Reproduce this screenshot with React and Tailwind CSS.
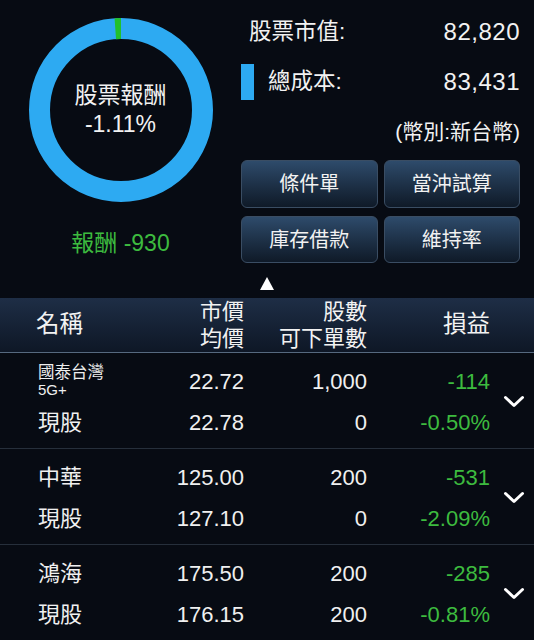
const font = "font-['Liberation_Sans','Noto_Sans_CJK_TC',sans-serif]"

const holdings = [
  { name: '國泰台灣', sub: '5G+', price: '22.72', avg: '22.78', qty: '1,000', avail: '0', pl: '-114', pct: '-0.50%' },
  { name: '中華', price: '125.00', avg: '127.10', qty: '200', avail: '0', pl: '-531', pct: '-2.09%' },
  { name: '鴻海', price: '175.50', avg: '176.15', qty: '200', avail: '200', pl: '-285', pct: '-0.81%' },
]

function Donut() {
  return (
    <div className="relative w-[184px] h-[184px] mx-auto mt-[18px]">
      <svg width="184" height="184" viewBox="0 0 184 184">
        <circle cx="92" cy="92" r="81.5" fill="none" stroke="#2daaf2" strokeWidth="21" />
        <path d="M86.31 10.7 A81.5 81.5 0 0 1 92 10.5" fill="none" stroke="#22c02c" strokeWidth="21" />
      </svg>
      <div className="absolute inset-0 flex flex-col items-center justify-center text-[23px] leading-[29px] text-[#f2f2f2]">
        <span>股票報酬</span>
        <span>-1.11%</span>
      </div>
    </div>
  )
}

function ActionButton({ label }) {
  return (
    <button className="flex-1 rounded-[6px] border border-[#3a4d63] bg-gradient-to-b from-[#2e4b6b] to-[#0f1a28] text-[20px] text-[#f2f2f2]">
      {label}
    </button>
  )
}

function Chevron() {
  return (
    <svg width="22" height="13" viewBox="0 0 22 13">
      <polyline points="2.5,2.5 11,10.5 19.5,2.5" fill="none" stroke="#ffffff" strokeWidth="3" strokeLinecap="round" strokeLinejoin="round" />
    </svg>
  )
}

function HoldingRow({ item }) {
  return (
    <div className="flex items-center border-b border-[#262f3b] pl-[38px] h-[96px]">
      <div className="flex flex-col pt-[2px] gap-[5px]">
        <div className="flex h-[36px] items-center text-[22px]">
          <div className="w-[100px]">
            {item.sub ? (
              <div className="flex flex-col text-[16.5px] leading-[18px] text-[#eeeeee]">
                <span>{item.name}</span>
                <span className="text-[15px]">{item.sub}</span>
              </div>
            ) : (
              <span className="text-[#f0f0f0]">{item.name}</span>
            )}
          </div>
          <div className="w-[106px] text-right text-[#f0f0f0]">{item.price}</div>
          <div className="w-[123px] text-right text-[#f0f0f0]">{item.qty}</div>
          <div className="w-[123px] text-right text-[#3dbb3f]">{item.pl}</div>
        </div>
        <div className="flex h-[36px] items-center text-[22px]">
          <div className="w-[100px] text-[#f0f0f0]">現股</div>
          <div className="w-[106px] text-right text-[#f0f0f0]">{item.avg}</div>
          <div className="w-[123px] text-right text-[#f0f0f0]">{item.avail}</div>
          <div className="w-[123px] text-right text-[#3dbb3f]">{item.pct}</div>
        </div>
      </div>
      <div className="flex flex-1 justify-center pl-[4px] pt-[2px]">
        <Chevron />
      </div>
    </div>
  )
}

export default function App() {
  return (
    <div className={`${font} w-[534px] h-[640px] overflow-hidden bg-[#070b13] text-[#f2f2f2]`}>
      {/* Summary */}
      <div className="flex h-[263px]">
        <div className="w-[241px] flex flex-col">
          <Donut />
          <div className="mt-[26px] text-center text-[23px] leading-[30px] text-[#3dbb3f]">報酬 -930</div>
        </div>
        <div className="flex-1 pr-[14px] pt-[7px] flex flex-col">
          <div className="flex h-[50px] items-center justify-between pl-[8px] text-[22.5px]">
            <span>股票市值:</span>
            <span className="text-[24px] tracking-[0.5px]">82,820</span>
          </div>
          <div className="flex h-[50px] items-center justify-between text-[22.5px]">
            <div className="flex items-center gap-[14px]">
              <div className="w-[13px] h-[36px] bg-[#2daaf2]" />
              <span>總成本:</span>
            </div>
            <span className="text-[24px] tracking-[0.5px]">83,431</span>
          </div>
          <div className="flex h-[50px] items-center justify-end text-[21px]">(幣別:新台幣)</div>
          <div className="mt-[3px] flex gap-[6px] h-[48px]">
            <ActionButton label="條件單" />
            <ActionButton label="當沖試算" />
          </div>
          <div className="mt-[8px] flex gap-[6px] h-[47px]">
            <ActionButton label="庫存借款" />
            <ActionButton label="維持率" />
          </div>
        </div>
      </div>

      {/* Collapse handle */}
      <div className="flex h-[35px] justify-center pt-[14px]">
        <div className="w-0 h-0 border-l-[7px] border-r-[7px] border-b-[13px] border-l-transparent border-r-transparent border-b-white" />
      </div>

      {/* Table header */}
      <div className="flex items-center h-[55px] pl-[36px] border-b border-[#56697f] bg-gradient-to-b from-[#1e2e46] to-[#0e1726]">
        <div className="w-[102px] text-[23.5px]">名稱</div>
        <div className="w-[106px] flex flex-col items-end text-[22px] leading-[27px]">
          <span>市價</span>
          <span>均價</span>
        </div>
        <div className="w-[123px] flex flex-col items-end text-[22px] leading-[27px]">
          <span>股數</span>
          <span>可下單數</span>
        </div>
        <div className="w-[123px] text-right text-[23.5px]">損益</div>
      </div>

      {holdings.map((item) => (
        <HoldingRow key={item.name} item={item} />
      ))}
    </div>
  )
}
